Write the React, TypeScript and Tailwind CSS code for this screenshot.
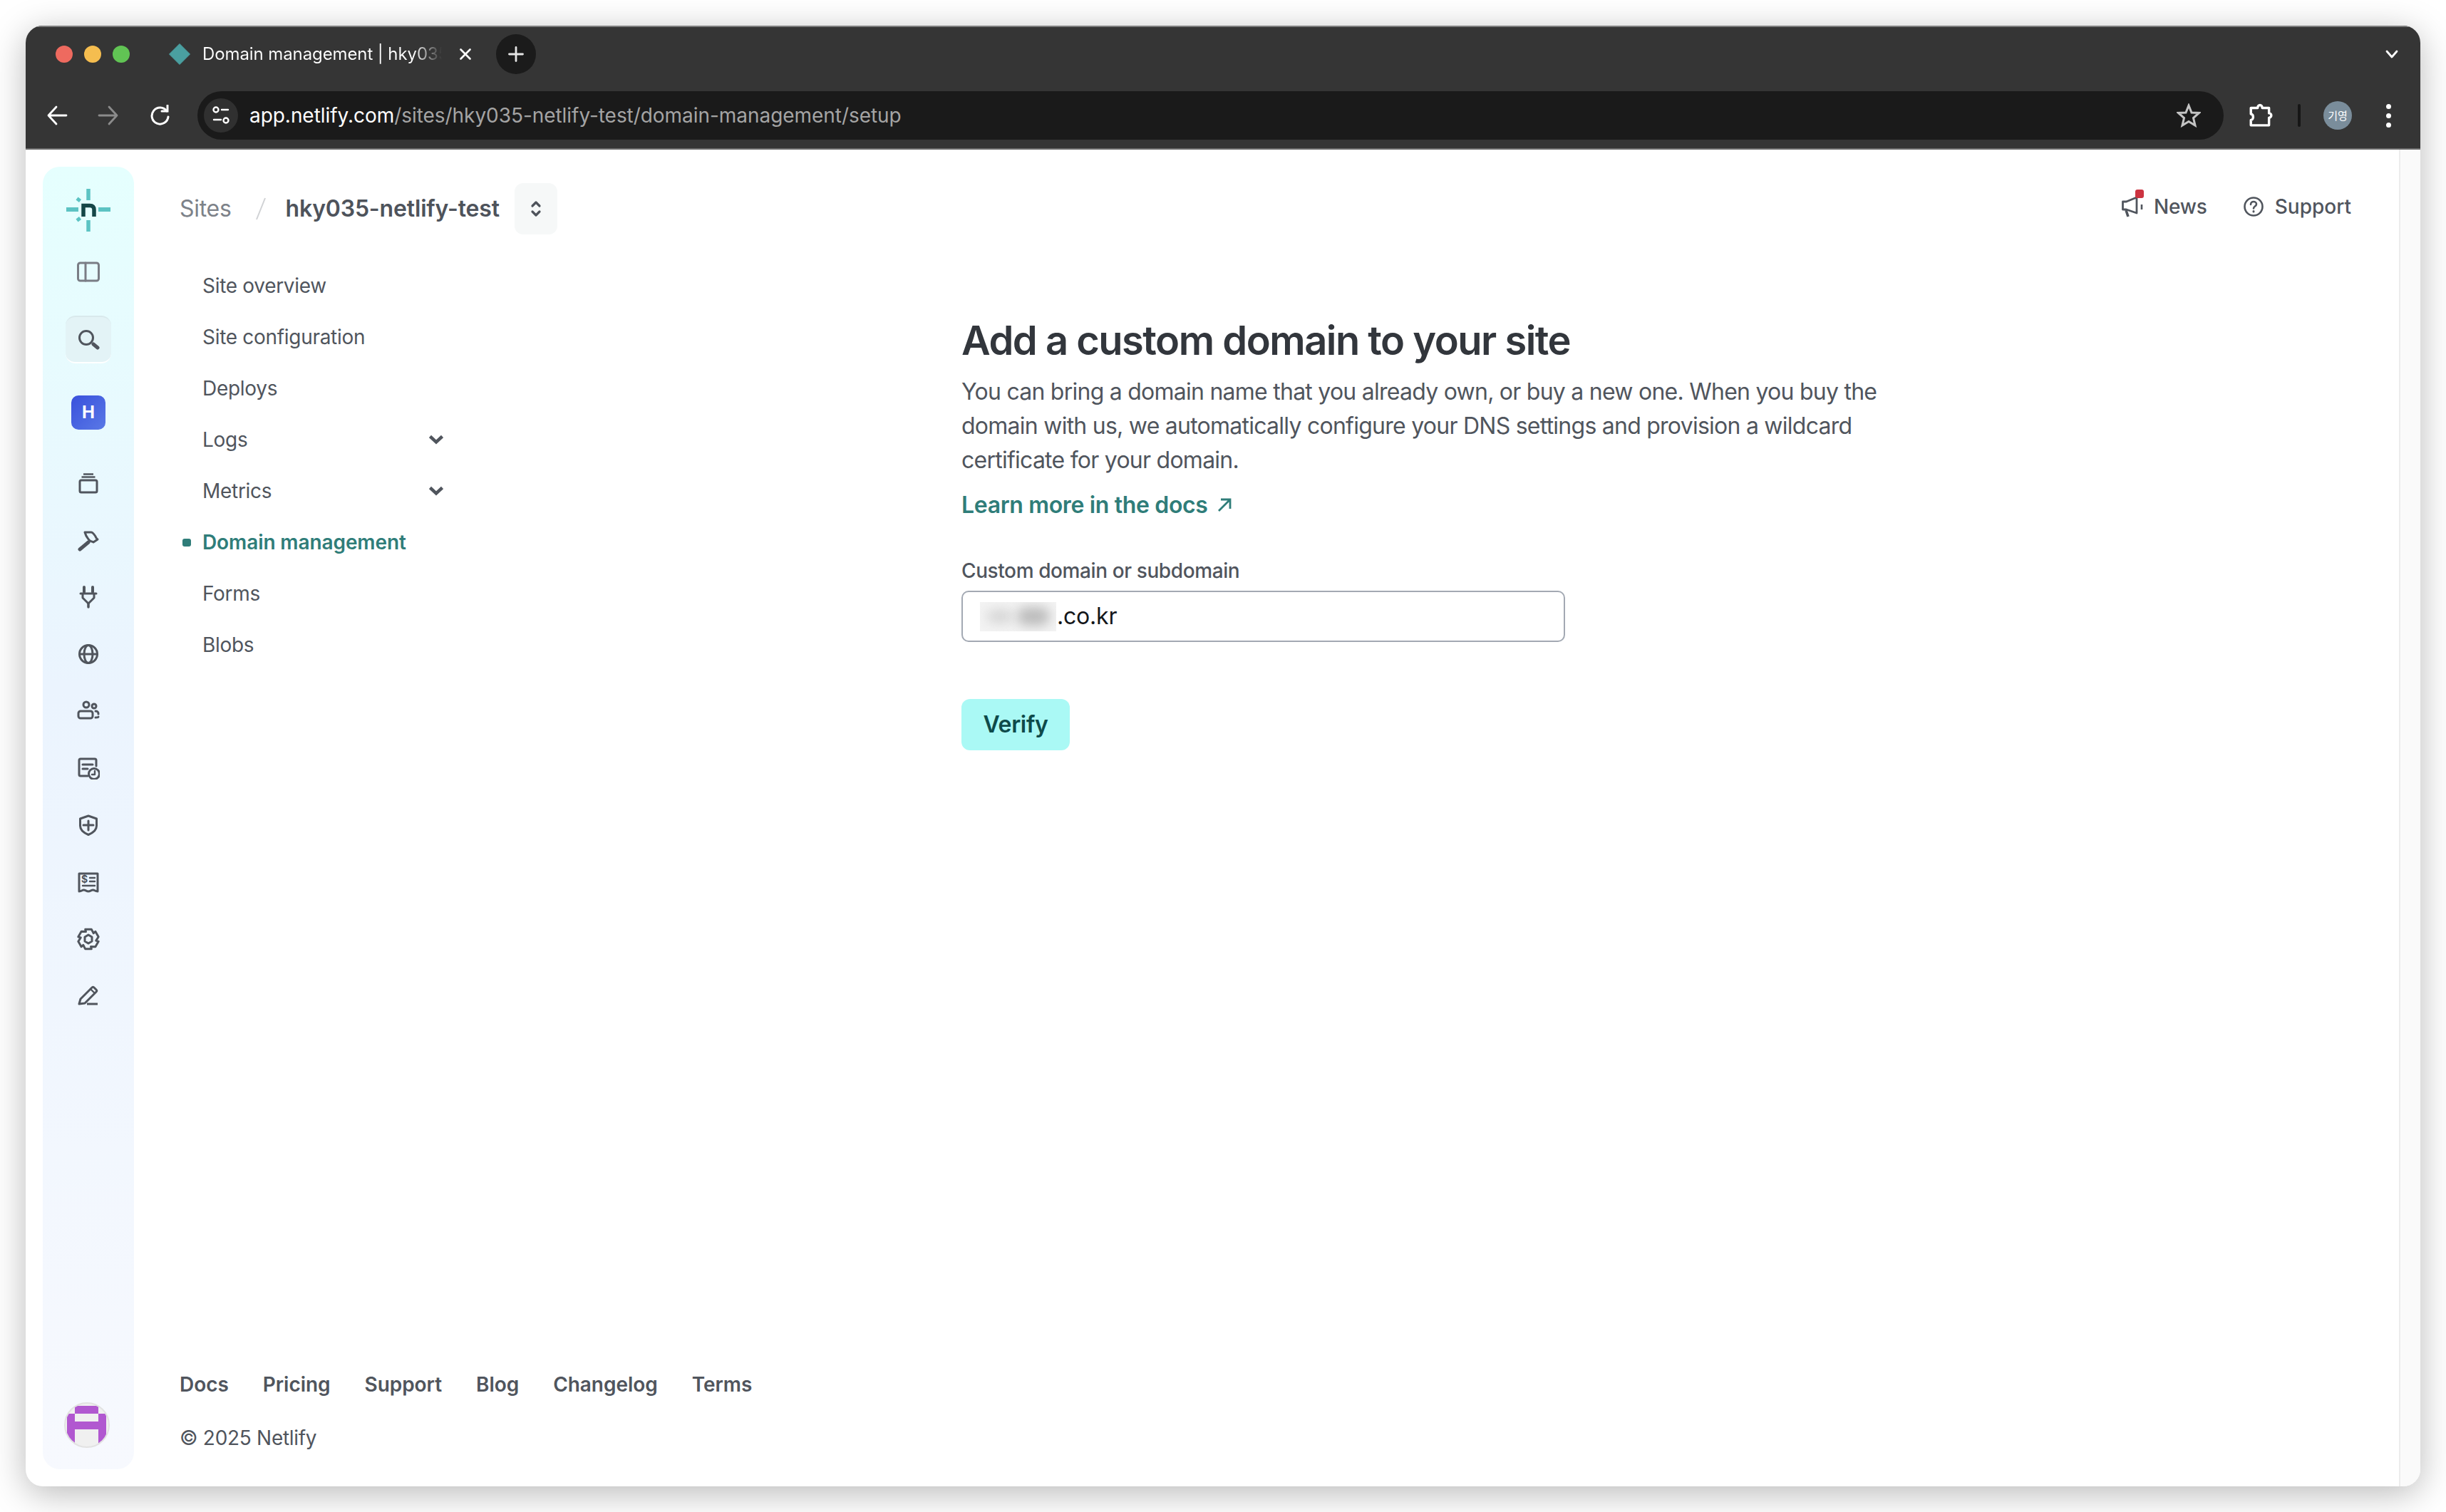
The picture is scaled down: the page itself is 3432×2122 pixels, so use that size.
import React from "react";

const gearPoints = (() => {
  const pts: string[] = [];
  for (let i = 0; i < 6; i++) {
    const a = (Math.PI / 3) * i;
    const steps = [
      [-0.3, 14.5],
      [0.3, 14.5],
      [0.72, 11],
    ];
    for (const [d, r] of steps) {
      pts.push(`${(16 + r * Math.sin(a + d)).toFixed(2)},${(16 - r * Math.cos(a + d)).toFixed(2)}`);
    }
  }
  return pts.join(" ");
})();

function Ico({ children, w = 32, h = 32, stroke = "#50555d", sw = 3 }: { children: React.ReactNode; w?: number; h?: number; stroke?: string; sw?: number }) {
  return (
    <svg width={w} height={h} viewBox={`0 0 ${w} ${h}`} fill="none" stroke={stroke} strokeWidth={sw} strokeLinecap="round" strokeLinejoin="round">
      {children}
    </svg>
  );
}

const railIcons: React.ReactNode[] = [
  <Ico key="stack">
    <path d="M9 3.500h14M6.500 7.500h19" strokeLinecap="butt" strokeWidth={2.400} />
    <rect x="4" y="12" width="24" height="17" rx="2" />
  </Ico>,
  <Ico key="hammer">
    <path d="M4 29l12-10" strokeWidth={5} />
    <path d="M11 5h9c2 0 6 5 7 8l2 2-6 4-2-1c-3 0-8-6-10-13z" />
  </Ico>,
  <Ico key="plug">
    <path d="M10 2v7M22 2v7" strokeWidth={4} />
    <path d="M5 11h22M8 11v6l8 8 8-8v-6" />
    <path d="M16 25v5" strokeWidth={3.500} />
  </Ico>,
  <Ico key="globe">
    <circle cx="16" cy="16" r="12.500" />
    <ellipse cx="16" cy="16" rx="6" ry="12.500" />
    <path d="M4 16h24" />
  </Ico>,
  <Ico key="users">
    <circle cx="13" cy="7" r="4" />
    <circle cx="24" cy="9" r="3" />
    <rect x="2" y="16" width="20" height="10" rx="3" />
    <path d="M26 16c3 0 4 1 4 4M26 25c2 0 4 0 4-1" />
  </Ico>,
  <Ico key="form">
    <path d="M15 27H5c-1.500 0-2-1-2-2V5c0-1.500 1-2 2-2h20c1.500 0 2 1 2 2v8" />
    <path d="M8 11h14M8 17h7" />
    <circle cx="24" cy="24" r="7.500" />
    <path d="M25 20v5h-4" strokeWidth={2.400} />
  </Ico>,
  <Ico key="shield">
    <path d="M16 3l11.500 4v10c0 6-5.500 10-11.500 12.500C10 27 4.500 23 4.500 17V7z" />
    <path d="M16 10v13M9 16h14" />
  </Ico>,
  <Ico key="receipt">
    <path d="M3 29V4h26v25c-4 0-4-2-6.500-2S19 29 16 29s-4-2-6.500-2S7 29 3 29z" />
    <text x="10.500" y="17" fontSize="14" fontWeight="700" textAnchor="middle" fill="#50555d" stroke="none" fontFamily="Inter, sans-serif">$</text>
    <path d="M18 10h7M18 15h7M8 21h17" strokeWidth={2.400} />
  </Ico>,
  <Ico key="gear">
    <polygon points={gearPoints} />
    <polygon points="16,10 21,13 21,19 16,22 11,19 11,13" />
  </Ico>,
  <Ico key="pencil">
    <path d="M3 27l2-7L21 4c1-1 2-1 3 0l3 3c1 1 1 2 0 3L11 26z" />
    <path d="M14 27h15" strokeLinecap="butt" />
    <path d="M19 6l6 6" strokeWidth={2.400} />
  </Ico>,
];

const navItems = [
  { label: "Site overview" },
  { label: "Site configuration" },
  { label: "Deploys" },
  { label: "Logs", chevron: true },
  { label: "Metrics", chevron: true },
  { label: "Domain management", active: true },
  { label: "Forms" },
  { label: "Blobs" },
];

const footerLinks = ["Docs", "Pricing", "Support", "Blog", "Changelog", "Terms"];

function TabStrip() {
  return (
    <div className="flex items-center h-[76px] pl-[42px] pr-[30px] shrink-0">
      <div className="flex items-center gap-[16px]">
        <div className="w-[24px] h-[24px] rounded-full bg-[#ee6a5f]" />
        <div className="w-[24px] h-[24px] rounded-full bg-[#f5bd4f]" />
        <div className="w-[24px] h-[24px] rounded-full bg-[#61c454]" />
      </div>
      <svg className="ml-[55px]" width="30" height="30" viewBox="0 0 30 30">
        <polygon points="15,0.500 29.500,15 15,29.500 0.500,15" fill="#4a9fa0" stroke="#4a9fa0" strokeWidth="1" strokeLinejoin="round" />
      </svg>
      <div className="ml-[17px] w-[336px] overflow-hidden whitespace-nowrap text-[24px] leading-[32px] tracking-[-0.1px] bg-gradient-to-r from-white from-[88%] to-transparent bg-clip-text text-transparent">
        Domain management | hky035-netlify-test
      </div>
      <svg className="ml-[25px]" width="16" height="16" viewBox="0 0 16 16" stroke="#ffffff" strokeWidth="2.600" strokeLinecap="round">
        <path d="M1.500 1.500l13 13M14.500 1.500l-13 13" />
      </svg>
      <div className="ml-[35px] w-[56px] h-[56px] rounded-full bg-[#1b1b1b] flex items-center justify-center">
        <svg width="22" height="22" viewBox="0 0 22 22" stroke="#e6e6e6" strokeWidth="2.800" strokeLinecap="round">
          <path d="M11 1.500v19M1.500 11h19" />
        </svg>
      </div>
      <svg className="ml-auto" width="20" height="14" viewBox="0 0 20 14" fill="none" stroke="#ffffff" strokeWidth="2.800" strokeLinecap="round" strokeLinejoin="round">
        <path d="M3 3l7 8 7-8" />
      </svg>
    </div>
  );
}

function ToolBar() {
  return (
    <div className="flex items-center h-[96px] pl-[26px] pt-[2px] shrink-0 border-b-2 border-[#6a6a6a]">
      <div className="w-[36px] h-[36px] flex items-center justify-center">
        <Ico w={30} h={30} stroke="#ffffff" sw={2.800}>
          <path d="M28 15H3M14 3L3 15l11 12" />
        </Ico>
      </div>
      <div className="ml-[36px] w-[36px] h-[36px] flex items-center justify-center">
        <Ico w={30} h={30} stroke="#8b8b8b" sw={2.800}>
          <path d="M2 15h25M16 3l11 12-11 12" />
        </Ico>
      </div>
      <div className="ml-[36px] w-[36px] h-[36px] flex items-center justify-center">
        <Ico w={30} h={30} stroke="#ffffff" sw={3}>
          <path d="M25 9a11.500 11.500 0 1 0 2 8" />
          <path d="M18 9h8V1" strokeLinejoin="miter" />
        </Ico>
      </div>
      <div className="ml-[35px] w-[2843px] h-[68px] rounded-full bg-[#1a1a1a] flex items-center pl-[9px] pr-[32px]">
        <div className="w-[48px] h-[48px] rounded-full bg-[#303030] flex items-center justify-center">
          <Ico w={26} h={28} stroke="#ffffff" sw={2.400}>
            <circle cx="6" cy="6" r="3.500" />
            <path d="M14 6h9M3 20h10" />
            <circle cx="20" cy="21" r="3.500" />
          </Ico>
        </div>
        <div className="ml-[16px] text-[28px] leading-[36px] whitespace-nowrap text-[#ffffff] tracking-[-0.05px]">
          app.netlify.com<span className="text-[#a4a4a4]">/sites/hky035-netlify-test/domain-management/setup</span>
        </div>
        <svg className="ml-auto" width="34" height="34" viewBox="0 0 34 34" fill="none" stroke="#c4c4c4" strokeWidth="3" strokeLinejoin="miter">
          <polygon points="17,3 21,13 31.500,13.500 23.500,20.500 26,31 17,25.500 8,31 10.500,20.500 2.500,13.500 13,13" />
        </svg>
      </div>
      <div className="ml-[34px] w-[36px] h-[36px] flex items-center justify-center -mt-[2px]">
        <svg width="36" height="36" viewBox="0 0 34 34" fill="none" stroke="#ffffff" strokeWidth="3.200" strokeLinejoin="round">
          <path d="M4 8h9c0-5 6-5 6 0h9v7c4 0 4 6 0 6v10H4v-7c4 0 4-8 0-8z" />
        </svg>
      </div>
      <div className="ml-[34px] w-[4px] h-[32px] rounded-full bg-[#161616]" />
      <div className="ml-[32px] w-[40px] h-[40px] rounded-full bg-[#7a8d9b] flex items-center justify-center text-[15px] text-white font-['Noto_Sans_CJK_KR',sans-serif]">
        기영
      </div>
      <div className="ml-[48px] w-[7px] flex flex-col gap-[6px]">
        <div className="w-[7px] h-[7px] rounded-full bg-white" />
        <div className="w-[7px] h-[7px] rounded-full bg-white" />
        <div className="w-[7px] h-[7px] rounded-full bg-white" />
      </div>
    </div>
  );
}

function Rail() {
  return (
    <aside className="ml-[24px] my-[24px] w-[128px] shrink-0 rounded-[24px] bg-gradient-to-b from-[#e5fffe] via-[#ebf4fe] via-40% to-[#f7f9fe] flex flex-col items-center pt-[28px] pb-[30px]">
      <svg width="64" height="64" viewBox="0 0 64 64" className="shrink-0">
        <g stroke="#5cc3c3" fill="none">
          <path d="M32 3v16M32 47v16" strokeWidth="5.500" />
          <path d="M1 32h17M46 32h17" strokeWidth="6" />
          <path d="M16 16.500l4.500 3.500M16 47.500l4.500-3.500" strokeWidth="5" />
        </g>
        <path d="M25 42V26.500h9c4 0 6 2 6 6V42" stroke="#154647" strokeWidth="5.500" fill="none" />
      </svg>
      <div className="mt-[32px] w-[48px] h-[48px] flex items-center justify-center">
        <Ico stroke="#7a7d85" sw={3}>
          <rect x="1.500" y="3" width="29" height="25" rx="3" />
          <path d="M12 3v25" />
        </Ico>
      </div>
      <div className="mt-[37px] w-[64px] h-[67px] rounded-[14px] bg-[#e3f3f6] border-t-2 border-[#d9e9ec] border-b-2 border-b-white flex items-center justify-center">
        <Ico sw={3}>
          <circle cx="13" cy="13" r="9.500" />
          <path d="M23 22l6 5" strokeWidth={5} />
        </Ico>
      </div>
      <div className="mt-[45px] w-[48px] h-[48px] rounded-[10px] bg-gradient-to-br from-[#3a50dc] to-[#5a78e6] flex items-center justify-center text-white text-[24px] font-bold font-['Inter',sans-serif]">
        H
      </div>
      <div className="mt-[51px] flex flex-col items-center gap-[32px]">
        {railIcons.map((icon, i) => (
          <div key={i} className="w-[48px] h-[48px] flex items-center justify-center">
            {icon}
          </div>
        ))}
      </div>
      <div className="mt-auto -ml-[4px] w-[64px] h-[64px] rounded-full bg-[#f0f0f0] border-2 border-[#e2e2e2] overflow-hidden">
        <svg width="60" height="60" viewBox="0 0 60 60">
          <path fill="#b158d0" d="M13 3h33v11h11v46H46V36H13v24H2V14h11zM13 14v11h33V14z" fillRule="evenodd" />
        </svg>
      </div>
    </aside>
  );
}

function Header() {
  return (
    <header className="flex items-center h-[72px] pr-[67px] shrink-0">
      <span className="text-[32px] leading-[40px] text-[#7d8289] tracking-[-0.3px]">Sites</span>
      <svg className="ml-[34px]" width="14" height="32" viewBox="0 0 14 32" stroke="#d0d2d5" strokeWidth="2">
        <path d="M13 1L1 31" />
      </svg>
      <span className="ml-[28px] text-[32px] leading-[40px] font-semibold text-[#4e535b] tracking-[-0.17px]">hky035-netlify-test</span>
      <div className="ml-[21px] w-[60px] h-[72px] rounded-[12px] bg-[#f6f8f8] flex items-center justify-center">
        <svg width="16" height="24" viewBox="0 0 16 24" fill="none" stroke="#4e535b" strokeWidth="3.200" strokeLinecap="round" strokeLinejoin="round">
          <path d="M3 8l5-5 5 5M3 16l5 5 5-5" />
        </svg>
      </div>
      <div className="ml-auto flex items-center gap-[14px] mb-[6px]">
        <div className="relative w-[34px] h-[34px]">
          <svg width="32" height="32" viewBox="0 0 32 32" fill="none" stroke="#50555d" strokeWidth="2.800" strokeLinejoin="round" className="mt-[1px]">
            <path d="M1.500 9v11h5L21 25V3L6.500 9z" />
            <path d="M6 21l3 9" strokeWidth="3.600" />
            <path d="M28 13v7" strokeWidth="2.600" />
          </svg>
          <div className="absolute right-[3px] top-[-7px] w-[12px] h-[12px] rounded-[3px] bg-[#cc3340]" />
        </div>
        <span className="-ml-[3px] text-[28px] leading-[36px] font-medium text-[#50555d] tracking-[-0.2px]">News</span>
        <svg className="ml-[37px]" width="28" height="28" viewBox="0 0 28 28" fill="none" stroke="#50555d" strokeWidth="2.600" strokeLinecap="round">
          <circle cx="14" cy="14" r="12.500" />
          <path d="M10 11c0-2.500 2-4 4-4s4 1.500 4 3.500c0 3-4 3-4 6" />
          <path d="M14 20.500v.5" strokeWidth="3" />
        </svg>
        <span className="ml-[2px] text-[28px] leading-[36px] font-medium text-[#50555d]">Support</span>
      </div>
    </header>
  );
}

function SideNav() {
  return (
    <nav className="mt-[36px] w-[370px] shrink-0 flex flex-col">
      {navItems.map((item) => (
        <div key={item.label} className="relative flex items-center justify-between h-[72px] pl-[32px]">
          {item.active && <div className="absolute left-[4px] w-[12px] h-[11px] rounded-[3px] bg-[#2f7d79]" />}
          <span className={item.active ? "text-[28px] leading-[36px] font-semibold text-[#2f7d79] tracking-[-0.1px]" : "text-[28px] leading-[36px] text-[#50555d] tracking-[-0.3px]"}>
            {item.label}
          </span>
          {item.chevron && (
            <svg width="20" height="14" viewBox="0 0 20 14" fill="none" stroke="#50555d" strokeWidth="4.500" strokeLinejoin="miter">
              <path d="M1.500 2.500L10 10.500l8.500-8" />
            </svg>
          )}
        </div>
      ))}
    </nav>
  );
}

function Form() {
  return (
    <main className="ml-[727px] mt-[113px] w-[1300px]">
      <h1 className="text-[56px] leading-[72px] font-semibold text-[#32363c] tracking-[-1.5px] whitespace-nowrap">Add a custom domain to your site</h1>
      <p className="mt-[12px] text-[32px] leading-[48px] text-[#50555d] w-[1296px] tracking-[-0.75px]">
        You can bring a domain name that you already own, or buy a new one. When you buy the domain with us, we automatically configure your DNS settings and provision a wildcard certificate for your domain.
      </p>
      <a className="mt-[15px] flex items-center h-[48px] text-[32px] font-semibold text-[#2f7d79] tracking-[-0.35px]">
        Learn more in the docs
        <svg className="ml-[12px]" width="22" height="22" viewBox="0 0 22 22" fill="none" stroke="#2f7d79" strokeWidth="2.800">
          <path d="M3 19L19 3M6 3h13v13" />
        </svg>
      </a>
      <label className="mt-[48px] block text-[28px] leading-[40px] font-medium text-[#50555d] tracking-[-0.4px]">Custom domain or subdomain</label>
      <div className="mt-[8px] w-[847px] h-[72px] rounded-[10px] border-2 border-[#a3a9b3] bg-white flex items-center pl-[24px]">
        <div className="w-[107px] h-[41px] bg-[#f3f3f3] overflow-hidden flex items-center justify-center gap-[6px]">
          <div className="w-[36px] h-[18px] rounded-full bg-[#d4d4d4] blur-[8px]" />
          <div className="w-[46px] h-[26px] rounded-full bg-[#bcbcbc] blur-[8px]" />
        </div>
        <span className="ml-[1px] text-[32px] leading-[40px] text-[#14171a] tracking-[-0.2px]">.co.kr</span>
      </div>
      <button className="mt-[80px] block w-[152px] h-[72px] rounded-[12px] bg-[#aaf9f5] text-[32px] font-semibold text-[#0e4a4a] tracking-[-0.3px]">Verify</button>
    </main>
  );
}

function Footer() {
  return (
    <footer className="mt-auto pb-[48px] shrink-0">
      <div className="flex items-center gap-[48px] h-[40px]">
        {footerLinks.map((l) => (
          <span key={l} className="text-[28px] leading-[40px] font-semibold text-[#50555d] tracking-[-0.05px]">
            {l}
          </span>
        ))}
      </div>
      <div className="mt-[35px] h-[40px] text-[28px] leading-[40px] text-[#50555d] tracking-[-0.3px]">© 2025 Netlify</div>
    </footer>
  );
}

export default function App() {
  return (
    <div className="w-[3432px] h-[2122px] bg-white pt-[36px] pl-[36px] overflow-hidden font-['Inter',sans-serif]">
      <div className="w-[3360px] h-[2050px] rounded-[24px] overflow-hidden bg-white flex flex-col shadow-[0_10px_50px_rgba(0,0,0,0.28)]">
        <div className="bg-[#353535] border-t-2 border-[#7c7c7c] flex flex-col shrink-0">
          <TabStrip />
          <ToolBar />
        </div>
        <div className="flex flex-1 min-h-0">
          <Rail />
          <div className="ml-[64px] flex-1 min-w-0 flex flex-col pt-[47px]">
            <Header />
            <div className="flex flex-1 min-h-0">
              <SideNav />
              <Form />
            </div>
            <Footer />
          </div>
          <div className="w-[30px] shrink-0 bg-[#fafafa] border-l-2 border-[#ececec]" />
        </div>
      </div>
    </div>
  );
}
